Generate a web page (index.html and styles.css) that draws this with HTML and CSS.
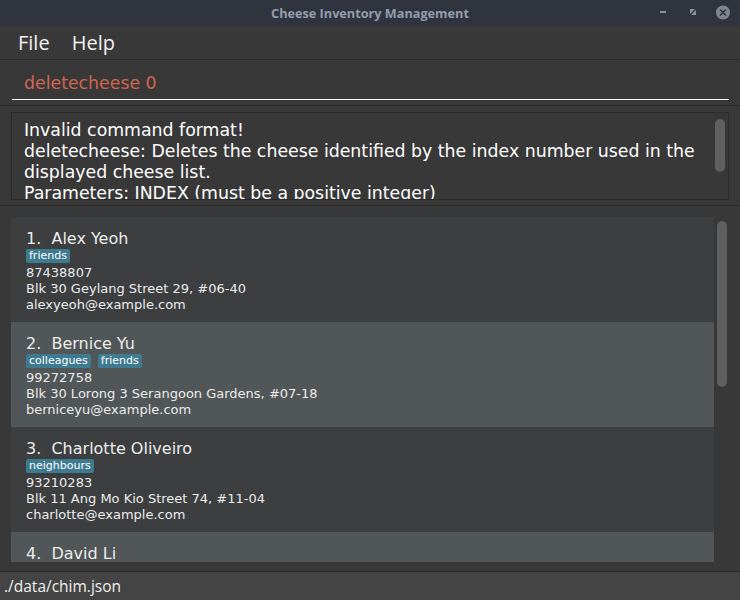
FILE: index.html
```html
<!DOCTYPE html>
<html>
<head>
<meta charset="utf-8">
<link rel="stylesheet" href="styles.css">
</head>
<body>
<div class="window">
  <header class="titlebar">
    <span></span>
    <span class="title">Cheese Inventory Management</span>
    <svg class="controls" width="84" height="26" viewBox="0 0 84 26">
      <rect x="4" y="11" width="6" height="2" fill="#8c939f"/>
      <polygon points="34,9 39,9 34,14" fill="#8c939f"/>
      <polygon points="40,10 40,15 35,15" fill="#8c939f"/>
      <circle cx="67" cy="12.5" r="7" fill="#7f8591"/>
      <path d="M64.5 10 L69.5 15 M69.5 10 L64.5 15" stroke="#2f343f" stroke-width="1.6" stroke-linecap="round"/>
    </svg>
  </header>
  <nav class="menubar">
    <span class="menu-item">File</span>
    <span class="menu-item">Help</span>
  </nav>
  <section class="pane command-pane">
    <div class="command-field">deletecheese 0</div>
  </section>
  <section class="pane result-pane">
    <div class="result-box">
      <div class="result-text">Invalid command format!<br>deletecheese: Deletes the cheese identified by the index number used in the<br>displayed cheese list.<br>Parameters: INDEX (must be a positive integer)</div>
      <div class="vscroll"><div class="thumb result-thumb"></div></div>
    </div>
  </section>
  <section class="pane list-pane">
    <div class="list-view">
      <div class="cards">
        <div class="card">
          <div class="name">1.&nbsp; Alex Yeoh</div>
          <div class="tags"><span class="tag">friends</span></div>
          <div class="detail">87438807</div>
          <div class="detail">Blk 30 Geylang Street 29, #06-40</div>
          <div class="detail">alexyeoh@example.com</div>
        </div>
        <div class="card alt">
          <div class="name">2.&nbsp; Bernice Yu</div>
          <div class="tags"><span class="tag">colleagues</span><span class="tag">friends</span></div>
          <div class="detail">99272758</div>
          <div class="detail">Blk 30 Lorong 3 Serangoon Gardens, #07-18</div>
          <div class="detail">berniceyu@example.com</div>
        </div>
        <div class="card">
          <div class="name">3.&nbsp; Charlotte Oliveiro</div>
          <div class="tags"><span class="tag">neighbours</span></div>
          <div class="detail">93210283</div>
          <div class="detail">Blk 11 Ang Mo Kio Street 74, #11-04</div>
          <div class="detail">charlotte@example.com</div>
        </div>
        <div class="card alt">
          <div class="name">4.&nbsp; David Li</div>
        </div>
      </div>
      <div class="vscroll list-scroll"><div class="thumb list-thumb"></div></div>
    </div>
  </section>
  <footer class="statusbar">./data/chim.json</footer>
</div>
</body>
</html>
```

FILE: styles.css
```css
html, body {
  margin: 0;
  padding: 0;
  background: #383838;
}

.window {
  width: 740px;
  height: 600px;
  overflow: hidden;
  display: flex;
  flex-direction: column;
  background: #383838;
  font-family: "DejaVu Sans", sans-serif;
}

.titlebar {
  height: 26px;
  flex: none;
  background: #2f343f;
  display: grid;
  grid-template-columns: 1fr auto 1fr;
  align-items: center;
}

.title {
  font-family: "Open Sans", sans-serif;
  font-weight: 700;
  font-size: 12.7px;
  color: #959dab;
  line-height: 26px;
}

.controls {
  justify-self: end;
  display: block;
}

.menubar {
  height: 33px;
  flex: none;
  background: #393939;
  display: flex;
  align-items: center;
  gap: 22px;
  padding-left: 18px;
}

.menu-item {
  font-family: "Open Sans", sans-serif;
  font-size: 20px;
  line-height: 33px;
  color: #f2f2f2;
}

.pane {
  border-top: 1px solid #2a2a2a;
  flex: none;
  box-sizing: border-box;
}

.command-pane {
  height: 46px;
  padding: 0 11px 0 12px;
}

.command-field {
  height: 40px;
  box-sizing: border-box;
  border-bottom: 1px solid #ffffff;
  display: flex;
  align-items: flex-end;
  padding: 0 0 5px 12px;
  font-size: 17.33px;
  line-height: 21px;
  color: #d06651;
}

.result-pane {
  height: 100px;
  padding: 6px 11px 5px 11px;
}

.result-box {
  height: 88px;
  box-sizing: border-box;
  border: 1px solid #2b2b2b;
  display: flex;
  overflow: hidden;
}

.result-text {
  flex: 1;
  padding: 7px 0 0 12px;
  font-size: 17.33px;
  line-height: 21px;
  color: #ffffff;
  white-space: nowrap;
  overflow: hidden;
}

.vscroll {
  width: 10px;
  flex: none;
}

.result-box .vscroll {
  margin-right: 3px;
}

.thumb {
  width: 10px;
  border-radius: 5px;
  background: #5f5f5f;
}

.result-thumb {
  margin-top: 6px;
  height: 53px;
}

.list-pane {
  height: 366px;
  padding: 11px 12px 9px 11px;
}

.list-view {
  height: 345px;
  display: flex;
  gap: 3px;
  overflow: hidden;
}

.cards {
  width: 703px;
  flex: none;
  overflow: hidden;
}

.list-thumb {
  margin-top: 4px;
  height: 166px;
}

.card {
  height: 105px;
  box-sizing: border-box;
  padding: 11px 0 9px 15px;
  background: #3c3e40;
  color: #ececec;
}

.card.alt {
  background: #515658;
}

.name {
  font-size: 16px;
  line-height: 21px;
  white-space: pre;
}

.tags {
  display: flex;
  gap: 7px;
  height: 14px;
  margin-bottom: 2px;
}

.tag {
  background: #3e7b91;
  color: #ffffff;
  font-size: 11px;
  line-height: 14px;
  padding: 0 3px;
  border-radius: 2px;
}

.detail {
  font-size: 13px;
  line-height: 16px;
}

.statusbar {
  flex: none;
  height: 29px;
  box-sizing: border-box;
  border-top: 1px solid #2a2a2a;
  background: #444444;
  padding-left: 4px;
  font-family: "Open Sans", sans-serif;
  font-size: 15.5px;
  line-height: 28px;
  color: #f0f0f0;
}
```
